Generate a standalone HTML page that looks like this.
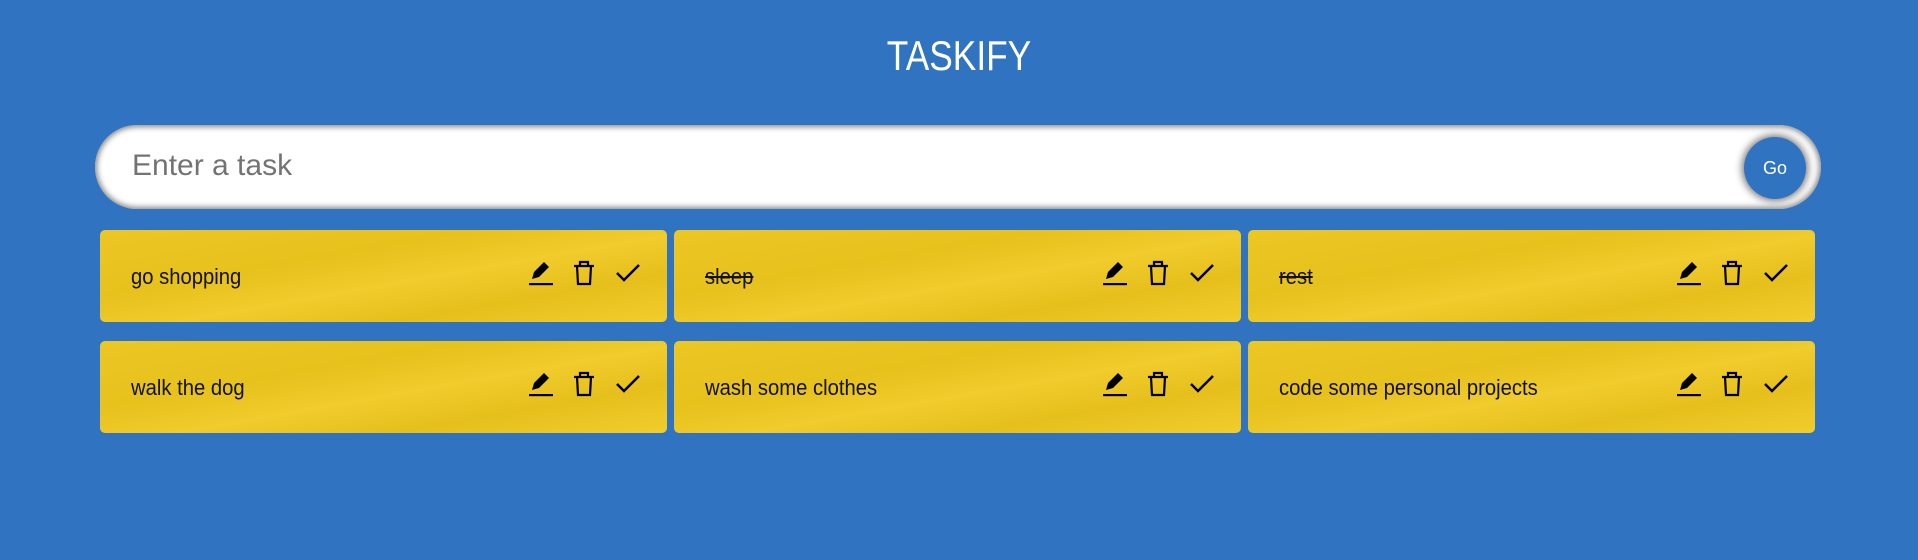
<!DOCTYPE html>
<html><head><style>
body{margin:0;width:1918px;height:560px;background:#3074c1;font-family:"Liberation Sans",sans-serif;overflow:hidden;position:relative}
.title{position:absolute;top:32px;left:0;width:1918px;text-align:center;color:#fff;font-size:42px;transform:scaleX(0.84)}
.inp{position:absolute;left:95px;top:125px;width:1726px;height:84px;border-radius:42px;background:#fff;box-shadow:inset 0 0 6px 2px #888;box-sizing:border-box}
.inp span{position:absolute;left:37px;top:24px;font-size:30px;color:#737373}
.go{position:absolute;left:1744px;top:137px;width:62px;height:62px;border-radius:50%;background:#3074c1;color:#fff;font-size:18px;line-height:62px;text-align:center;box-shadow:0 0 8px 2px #777}
.card{position:absolute;width:567px;height:92px;border-radius:5px;background:linear-gradient(170deg,#ecc623 0%,#e7c11c 35%,#f0cc2c 55%,#e6bf1c 75%,#f1cd2d 100%)}
.card .t{position:absolute;left:31px;top:34px;font-size:22px;color:#111;transform:scaleX(0.92);transform-origin:left}
.card .t.s{text-decoration:line-through}
.ic{position:absolute;top:28px}
</style></head><body>
<div class="title">TASKIFY</div>
<div class="inp"><span>Enter a task</span></div>
<div class="go">Go</div>
<div class="card" style="left:100px;top:230px"><div class="t">go shopping</div>
<svg class="ic" style="left:427px" width="28" height="30" viewBox="0 0 28 30"><path d="M5 21 L7 14 L17 4 L22 9 L12 19 Z" fill="#000"/><rect x="2" y="25" width="24" height="2.2" fill="#000"/></svg>
<svg class="ic" style="left:471px" width="26" height="30" viewBox="0 0 26 30"><path d="M3 8 H23 M9 8 V4 H17 V8 M6 8 L7 26 H19 L20 8" fill="none" stroke="#000" stroke-width="2.2"/></svg>
<svg class="ic" style="left:514px" width="28" height="30" viewBox="0 0 28 30"><path d="M3 15 L10 22 L25 7" fill="none" stroke="#000" stroke-width="2.5"/></svg></div>
<div class="card" style="left:674px;top:230px"><div class="t s">sleep</div>
<svg class="ic" style="left:427px" width="28" height="30" viewBox="0 0 28 30"><path d="M5 21 L7 14 L17 4 L22 9 L12 19 Z" fill="#000"/><rect x="2" y="25" width="24" height="2.2" fill="#000"/></svg>
<svg class="ic" style="left:471px" width="26" height="30" viewBox="0 0 26 30"><path d="M3 8 H23 M9 8 V4 H17 V8 M6 8 L7 26 H19 L20 8" fill="none" stroke="#000" stroke-width="2.2"/></svg>
<svg class="ic" style="left:514px" width="28" height="30" viewBox="0 0 28 30"><path d="M3 15 L10 22 L25 7" fill="none" stroke="#000" stroke-width="2.5"/></svg></div>
<div class="card" style="left:1248px;top:230px"><div class="t s">rest</div>
<svg class="ic" style="left:427px" width="28" height="30" viewBox="0 0 28 30"><path d="M5 21 L7 14 L17 4 L22 9 L12 19 Z" fill="#000"/><rect x="2" y="25" width="24" height="2.2" fill="#000"/></svg>
<svg class="ic" style="left:471px" width="26" height="30" viewBox="0 0 26 30"><path d="M3 8 H23 M9 8 V4 H17 V8 M6 8 L7 26 H19 L20 8" fill="none" stroke="#000" stroke-width="2.2"/></svg>
<svg class="ic" style="left:514px" width="28" height="30" viewBox="0 0 28 30"><path d="M3 15 L10 22 L25 7" fill="none" stroke="#000" stroke-width="2.5"/></svg></div>
<div class="card" style="left:100px;top:341px"><div class="t">walk the dog</div>
<svg class="ic" style="left:427px" width="28" height="30" viewBox="0 0 28 30"><path d="M5 21 L7 14 L17 4 L22 9 L12 19 Z" fill="#000"/><rect x="2" y="25" width="24" height="2.2" fill="#000"/></svg>
<svg class="ic" style="left:471px" width="26" height="30" viewBox="0 0 26 30"><path d="M3 8 H23 M9 8 V4 H17 V8 M6 8 L7 26 H19 L20 8" fill="none" stroke="#000" stroke-width="2.2"/></svg>
<svg class="ic" style="left:514px" width="28" height="30" viewBox="0 0 28 30"><path d="M3 15 L10 22 L25 7" fill="none" stroke="#000" stroke-width="2.5"/></svg></div>
<div class="card" style="left:674px;top:341px"><div class="t">wash some clothes</div>
<svg class="ic" style="left:427px" width="28" height="30" viewBox="0 0 28 30"><path d="M5 21 L7 14 L17 4 L22 9 L12 19 Z" fill="#000"/><rect x="2" y="25" width="24" height="2.2" fill="#000"/></svg>
<svg class="ic" style="left:471px" width="26" height="30" viewBox="0 0 26 30"><path d="M3 8 H23 M9 8 V4 H17 V8 M6 8 L7 26 H19 L20 8" fill="none" stroke="#000" stroke-width="2.2"/></svg>
<svg class="ic" style="left:514px" width="28" height="30" viewBox="0 0 28 30"><path d="M3 15 L10 22 L25 7" fill="none" stroke="#000" stroke-width="2.5"/></svg></div>
<div class="card" style="left:1248px;top:341px"><div class="t">code some personal projects</div>
<svg class="ic" style="left:427px" width="28" height="30" viewBox="0 0 28 30"><path d="M5 21 L7 14 L17 4 L22 9 L12 19 Z" fill="#000"/><rect x="2" y="25" width="24" height="2.2" fill="#000"/></svg>
<svg class="ic" style="left:471px" width="26" height="30" viewBox="0 0 26 30"><path d="M3 8 H23 M9 8 V4 H17 V8 M6 8 L7 26 H19 L20 8" fill="none" stroke="#000" stroke-width="2.2"/></svg>
<svg class="ic" style="left:514px" width="28" height="30" viewBox="0 0 28 30"><path d="M3 15 L10 22 L25 7" fill="none" stroke="#000" stroke-width="2.5"/></svg></div>
</body></html>
